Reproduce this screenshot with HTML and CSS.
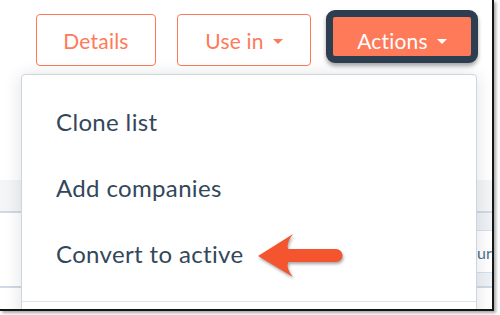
FILE: index.html
```html
<!DOCTYPE html>
<html lang="en">
<head>
    <meta charset="UTF-8">
    <meta name="viewport" content="width=device-width, initial-scale=1.0">
    <title>List actions</title>
    <link rel="stylesheet" href="styles.css">
</head>
<body>
    <div class="frame">
        <div class="toolbar">
            <button class="btn btn-details">Details</button>
            <button class="btn btn-use">Use in <span class="caret"></span></button>
            <button class="btn btn-primary">Actions <span class="caret"></span></button>
        </div>

        <div class="table">
            <div class="row row-head">
                <div class="lead"></div>
                <div class="main"></div>
            </div>
            <div class="row row-band">
                <div class="lead"></div>
                <div class="main"></div>
            </div>
            <div class="row row-body">
                <div class="lead"></div>
                <div class="main"><span class="cell-text">ur</span></div>
            </div>
            <div class="row row-band row-band-end">
                <div class="lead"></div>
                <div class="main"></div>
            </div>
            <div class="row row-last">
                <div class="lead"></div>
                <div class="main"></div>
            </div>
        </div>

        <div class="dropdown">
            <ul class="menu">
                <li>Clone list</li>
                <li>Add companies</li>
                <li>Convert to active</li>
            </ul>
            <div class="menu-divider"></div>
        </div>

        <svg class="arrow" width="100" height="60" viewBox="250 225 100 60">
            <path d="M258 256 L293 234 Q286 243 288 249 L336 249 A6.5 6.5 0 0 1 336 262 L288 262 Q286 269 293 277 Z" fill="#f4552f"/>
        </svg>
    </div>
</body>
</html>
```

FILE: styles.css
```css
* {
    margin: 0;
    padding: 0;
    box-sizing: border-box;
}
body {
    width: 500px;
    height: 315px;
    background: white;
    font-family: 'Lato', 'Noto Sans', sans-serif;
    overflow: hidden;
}
.frame {
    position: relative;
    width: 494px;
    height: 311px;
    border-right: 2px solid #161616;
    border-bottom: 2px solid #161616;
    box-shadow: 2px 2px 3px rgba(0, 0, 0, 0.35);
    background: white;
    overflow: hidden;
}
.toolbar {
    display: flex;
    align-items: flex-start;
    padding: 14px 0 0 36px;
    height: 180px;
}
.btn {
    flex-shrink: 0;
    height: 52px;
    border: 1px solid #ff7a59;
    border-radius: 4px;
    background: white;
    color: #ff7a59;
    font-family: inherit;
    font-size: 21px;
    letter-spacing: 0.2px;
    white-space: nowrap;
    display: flex;
    align-items: center;
    justify-content: center;
    gap: 9px;
}
.btn-details {
    width: 120px;
    margin-right: 21px;
}
.btn-use {
    width: 134px;
    margin-right: 15px;
}
.caret {
    width: 0;
    height: 0;
    border-left: 5.5px solid transparent;
    border-right: 5.5px solid transparent;
    border-top: 5.5px solid currentColor;
    margin-top: 2px;
}
.btn-primary {
    width: 152px;
    height: 53px;
    margin-top: -4px;
    padding-top: 7px;
    background: #ff7a59;
    color: white;
    border: 7px solid #2d3e50;
    border-radius: 9px;
    box-shadow: 0 3px 4px rgba(0, 0, 0, 0.35);
}
.table {
    display: flex;
    flex-direction: column;
}
.row {
    display: flex;
}
.lead {
    width: 21px;
}
.main {
    flex: 1;
}
.row-head {
    height: 33px;
}
.row-head .lead,
.row-head .main {
    background: #f3f5f7;
    border-bottom: 2px solid #cfdae6;
}
.row-band {
    height: 18px;
}
.row-band .main {
    background: #eef2f6;
    border-bottom: 1px solid #d7e0ea;
}
.row-body {
    height: 42px;
}
.row-body .main {
    display: flex;
    align-items: center;
    padding-left: 456px;
}
.cell-text {
    color: #516f90;
    font-size: 16px;
    white-space: nowrap;
}
.row-band-end {
    height: 15px;
}
.row-band-end .main {
    border-top: 1px solid #d7e0ea;
    border-bottom: 2px solid #cfdae6;
    margin-top: -1px;
}
.row-band-end .lead {
    border-bottom: 2px solid #cfdae6;
}
.row-last {
    height: 30px;
}
.dropdown {
    position: absolute;
    left: 21px;
    top: 74px;
    width: 456px;
    height: 260px;
    background: white;
    border: 1px solid #cbd6e2;
    border-radius: 4px;
    box-shadow: 0 1px 18px rgba(0, 0, 0, 0.12);
}
.menu {
    list-style: none;
    padding: 14px 0;
}
.menu li {
    height: 66px;
    line-height: 66px;
    padding-left: 34px;
    color: #33475b;
    font-size: 24px;
    letter-spacing: 0.35px;
}
.menu-divider {
    border-top: 1px solid #dfe3eb;
}
.arrow {
    position: absolute;
    left: 250px;
    top: 225px;
    filter: drop-shadow(1px 2px 1.5px rgba(0, 0, 0, 0.35));
}
```
